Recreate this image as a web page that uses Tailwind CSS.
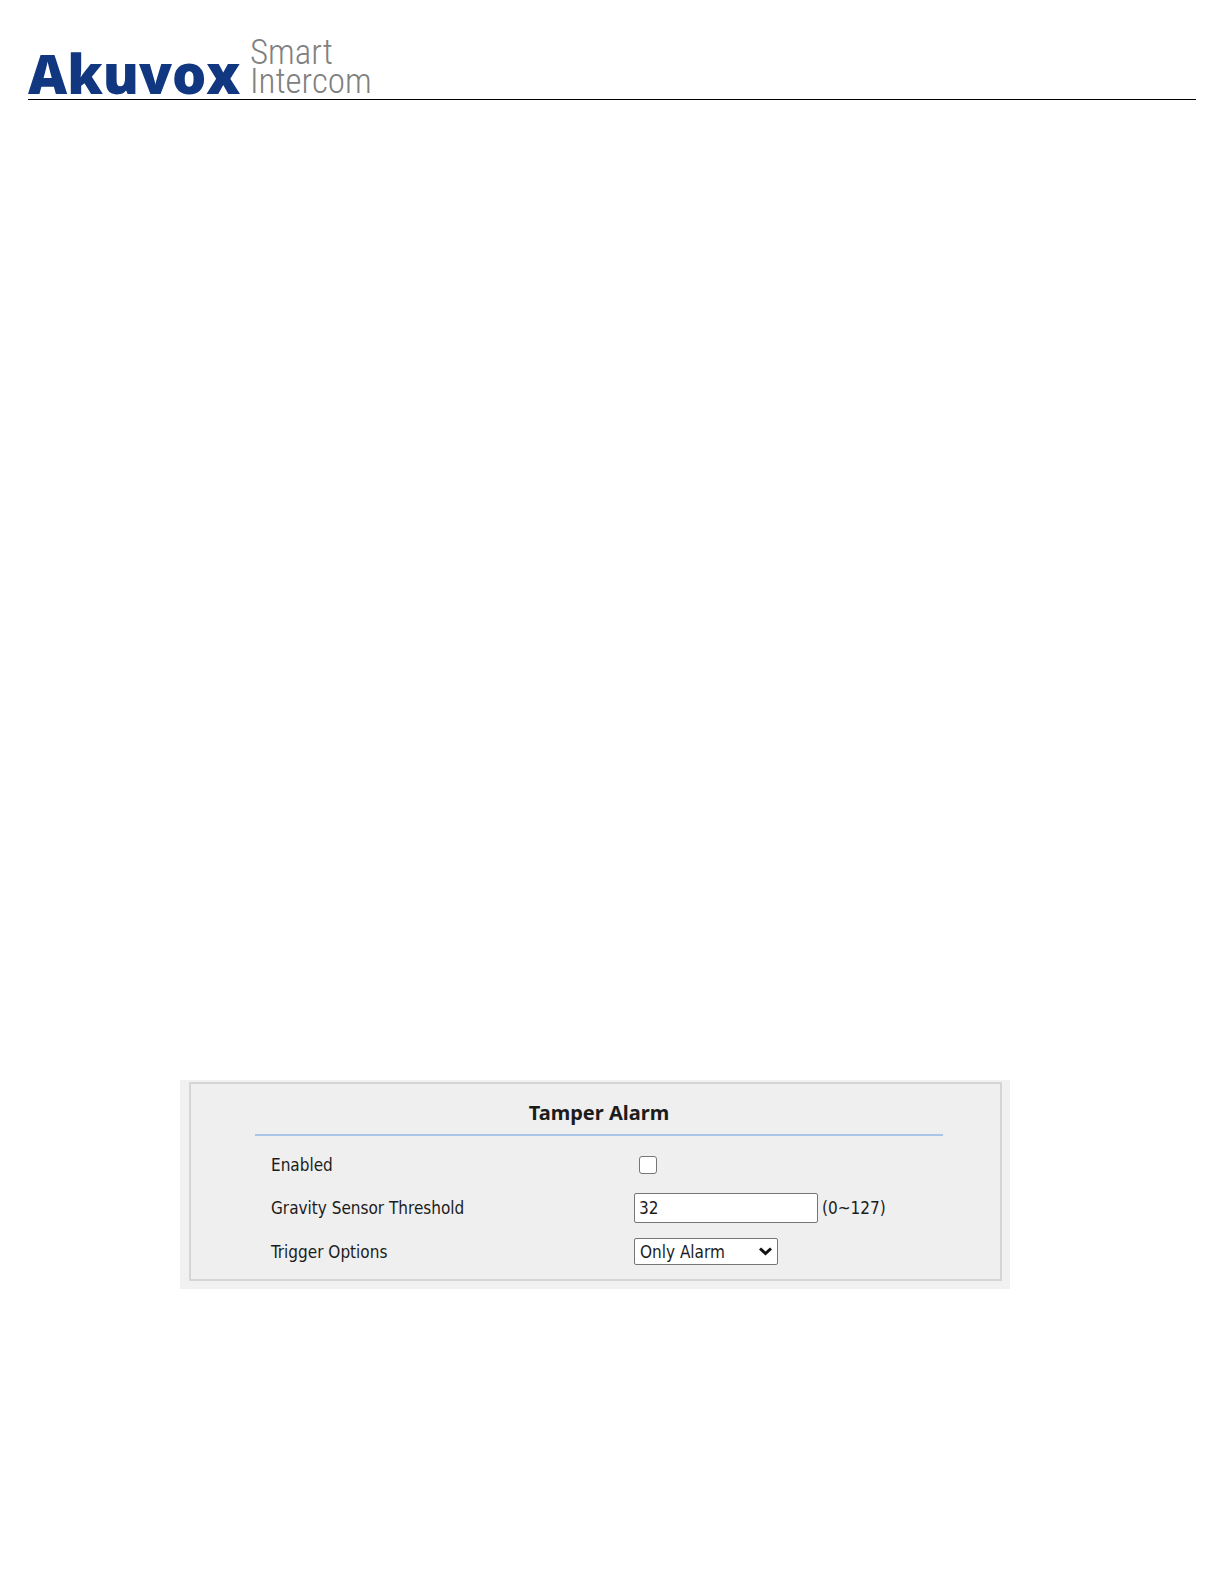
<!doctype html>
<html lang="en">
<head>
<meta charset="UTF-8">
<meta name="viewport" content="width=device-width, initial-scale=1">
<title>Tamper Alarm</title>
<script src="https://cdn.jsdelivr.net/npm/@tailwindcss/browser@4"></script>
</head>
<body class="min-h-screen bg-white text-[#1c1c1c]">
	<header class="mx-7 flex h-[100px] items-end gap-3 border-b border-black pb-[3px]">
		<div class="w-[210px] font-['Open_Sans',sans-serif] text-[54px] font-extrabold leading-[46px] text-[#10377f]">Akuvox</div>
		<div class="font-['Roboto_Condensed',Roboto,sans-serif] text-[35px] font-light leading-[29px] text-[#808080]">
			<div>Smart</div>
			<div>Intercom</div>
		</div>
	</header>

	<main class="ml-[180px] mr-[214px] mt-[980px]">
		<form class="bg-[#f1f1f1] pb-2 pl-[9px] pr-2 pt-[2px]">
			<section class="border-2 border-[#d5d5d5] bg-[#efefef] pb-[5px] pl-16 pr-[57px]">
				<h1 class="flex h-[52px] items-center justify-center border-b-2 border-[#a9c6e6] pt-2 font-['Noto_Sans',sans-serif] text-xl font-bold">Tamper Alarm</h1>
				<div class="px-4 pt-[7px] font-['DejaVu_Sans_Condensed','DejaVu_Sans',sans-serif] text-[17px] leading-6">
					<div class="flex h-[43px] items-center">
						<label for="enabled" class="w-[363px]">Enabled</label>
						<input id="enabled" type="checkbox" class="ml-[5px] size-[18px] appearance-none rounded-[3px] border border-[#767676] bg-white checked:bg-[#0075ff]">
					</div>
					<div class="flex h-[43px] items-center">
						<label for="threshold" class="w-[363px]">Gravity Sensor Threshold</label>
						<input id="threshold" type="text" value="32" class="h-[30px] w-[184px] rounded-[2px] border border-[#767676] bg-white px-1">
						<span class="ml-1">(0~127)</span>
					</div>
					<div class="flex h-[45px] items-center">
						<label for="trigger" class="w-[363px]">Trigger Options</label>
						<div class="relative">
							<select id="trigger" class="block h-[27px] w-36 appearance-none rounded-[2px] border border-[#767676] bg-white pl-[5px]">
								<option>Only Alarm</option>
							</select>
							<svg class="pointer-events-none absolute right-[6px] top-[9px]" width="13" height="9" viewBox="0 0 13 9" fill="none" stroke="#111" stroke-width="3"><path d="M1 1.5 6.5 6.5 12 1.5"/></svg>
						</div>
					</div>
				</div>
			</section>
		</form>
	</main>
</body>
</html>
